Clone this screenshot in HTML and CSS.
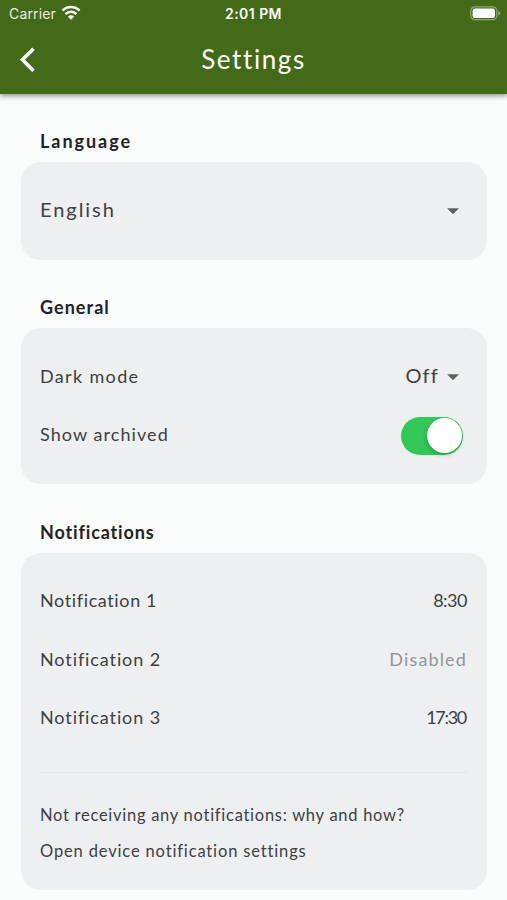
FILE: index.html
```html
<!DOCTYPE html>
<html lang="en">
<head>
<meta charset="utf-8">
<title>Settings</title>
<link rel="stylesheet" href="styles.css">
</head>
<body>
<header class="app-header">
  <div class="status-bar">
    <div class="carrier"><span>Carrier</span>
      <svg class="wifi" width="20" height="16" viewBox="0 0 20 16" fill="none" stroke="#fff" stroke-width="2.5"><path d="M1.5 5.7C6.2.9 13.8.9 18.5 5.7M4.5 9C7.6 6 12.4 6 15.5 9"/><path d="M6.8 11.4C8.6 9.7 11.4 9.7 13.2 11.4L10 14.7Z" fill="#fff" stroke="none"/></svg>
    </div>
    <span class="clock">2:01 PM</span>
    <svg class="battery" width="31" height="15" viewBox="0 0 31 15"><rect x=".8" y=".8" width="26" height="12.9" rx="4" fill="none" stroke="#fff" stroke-opacity=".4" stroke-width="1.2"/><rect x="2.6" y="2.6" width="22.4" height="9.3" rx="2.2" fill="#fff"/><path d="M28.4 5v4.4q1.8-.8 1.8-2.2T28.4 5Z" fill="#fff" fill-opacity=".5"/></svg>
  </div>
  <div class="title-bar">
    <svg class="back" width="18" height="26" viewBox="0 0 18 26" fill="none" stroke="#fff" stroke-width="3.6"><path d="M14.5 1.8 3.4 12.8 14.5 23.8"/></svg>
    <h1>Settings</h1>
  </div>
</header>
<main>
  <h2 class="t-language">Language</h2>
  <section class="card language">
    <div class="row"><span class="value english">English</span><i class="caret"></i></div>
  </section>
  <h2 class="t-general">General</h2>
  <section class="card general">
    <div class="row"><span class="dark">Dark mode</span><span class="select"><span class="value off">Off</span><i class="caret"></i></span></div>
    <div class="row"><span class="archived">Show archived</span><span class="toggle"><span class="knob"></span></span></div>
  </section>
  <h2 class="t-notifications">Notifications</h2>
  <section class="card notifications">
    <div class="row"><span class="name first">Notification 1</span><span class="time">8:30</span></div>
    <div class="row"><span class="name">Notification 2</span><span class="disabled">Disabled</span></div>
    <div class="row"><span class="name">Notification 3</span><span class="time late">17:30</span></div>
    <hr>
    <a class="link why">Not receiving any notifications: why and how?</a>
    <a class="link device">Open device notification settings</a>
  </section>
</main>
</body>
</html>
```
FILE: styles.css
```css
* { box-sizing: border-box; }
body { margin: 0; height: 900px; overflow: hidden; background: #fafbfb; color: #3f4043; font-family: Lato, sans-serif; font-size: 18px; white-space: nowrap; }
.app-header { height: 94px; background: #426a18; color: #fff; box-shadow: 0 2px 5px rgba(0,0,0,.42); }
.status-bar { height: 28px; display: grid; grid-template-columns: 1fr auto 1fr; align-items: center; padding: 0 6px 0 9px; font: 14px/28px Inter, sans-serif; }
.carrier { display: flex; align-items: center; gap: 5px; color: #e8eee2; letter-spacing: .15px; }
.wifi { margin-top: -2px; }
.clock { font-weight: 600; letter-spacing: .45px; margin-left: -3px; }
.battery { justify-self: end; margin-top: -2px; }
.title-bar { height: 64px; display: grid; grid-template-columns: 40px 1fr 40px; align-items: center; padding: 0 19px; }
.title-bar h1 { margin: 0; text-align: center; font-size: 26px; font-weight: 400; line-height: 62px; height: 64px; letter-spacing: 1.6px; }
main { padding: 30px 20px 0 21px; }
h2 { margin: 0 0 0 19px; height: 38px; line-height: 34px; font-size: 18px; font-weight: 700; color: #222326; letter-spacing: .9px; }
.t-language { letter-spacing: 1.95px; }
.t-general { letter-spacing: 1.05px; }
.t-notifications { letter-spacing: .85px; }
.card { background: #edeff0; border-radius: 20px; padding: 19px 20px 0 19px; }
.language { height: 98px; margin-bottom: 30px; }
.general { height: 156px; margin-bottom: 31px; }
.notifications { height: 337px; padding-top: 18px; }
.row { height: 58.6px; display: flex; justify-content: space-between; align-items: center; letter-spacing: .9px; }
.value { font-size: 20px; letter-spacing: 1.2px; padding-bottom: 2px; }
.english { letter-spacing: 1.95px; }
.dark { letter-spacing: 1.35px; padding-bottom: 1px; }
.archived { letter-spacing: 1.08px; padding-bottom: 2px; }
.select { display: flex; align-items: center; gap: 8px; }
.caret { width: 12px; height: 6px; margin: 2px 8px 0 0; background: #606164; clip-path: polygon(0 0, 100% 0, 50% 100%); }
.toggle { width: 62.5px; height: 38px; margin: 2px 4px 0 0; padding: 1.5px; border-radius: 19px; background: #34c759; display: flex; justify-content: flex-end; }
.knob { width: 35px; height: 35px; border-radius: 50%; background: #fff; box-shadow: -1px 2px 4px rgba(0,0,0,.2); }
.first { letter-spacing: .62px; }
.time { letter-spacing: -.5px; }
.late { letter-spacing: -1.3px; padding-right: 1px; }
.disabled { color: #949597; letter-spacing: 1.15px; }
hr { border: 0; height: 1px; background: #e1e3e5; margin: 25px 0 24px; }
.link { display: block; height: 36.7px; line-height: 37.5px; font-size: 16.5px; }
.why { letter-spacing: .73px; }
.device { letter-spacing: .85px; }
```
